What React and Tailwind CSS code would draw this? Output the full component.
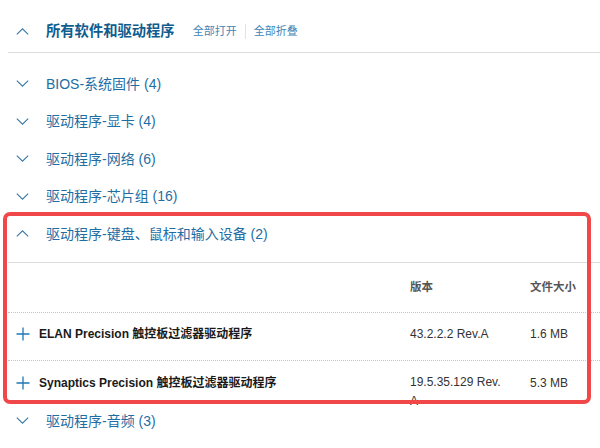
import React from "react";

const ChevronUp = () => (
  <svg width="13" height="7" viewBox="0 0 13 7" fill="none">
    <path d="M0.8 6.3 L6.5 0.9 L12.2 6.3" stroke="#3a7aa8" strokeWidth="1.15" />
  </svg>
);
const ChevronDown = () => (
  <svg width="13" height="7" viewBox="0 0 13 7" fill="none">
    <path d="M0.8 0.7 L6.5 6.1 L12.2 0.7" stroke="#3a7aa8" strokeWidth="1.15" />
  </svg>
);
const Plus = () => (
  <svg width="14" height="14" viewBox="0 0 14 14" fill="none">
    <path d="M7 0.5 V13.5 M0.5 7 H13.5" stroke="#1f78b4" strokeWidth="1.3" />
  </svg>
);

const Row = ({ label, open }) => (
  <div className="flex items-center h-[37.5px]">
    <div className="w-[38px] pl-2 flex items-center">{open ? <ChevronUp /> : <ChevronDown />}</div>
    <span className="text-[14px] text-[#1f6ea3] leading-none">{label}</span>
  </div>
);

export default function App() {
  return (
    <div className="relative w-[600px] h-[448px] overflow-hidden bg-white font-['Liberation_Sans','Noto_Sans_CJK_SC',sans-serif]">
      <div className="pl-2">
        <div className="flex items-center h-[53px] pt-[10px] border-b border-[#dcdcdc]">
          <div className="w-[38px] pl-2 flex items-center"><ChevronUp /></div>
          <span className="text-[14.3px] font-bold text-[#0f5c8e] leading-none">所有软件和驱动程序</span>
          <span className="ml-[18px] text-[11px] text-[#3f86b8] leading-none">全部打开</span>
          <span className="mx-[8px] w-px h-[15px] bg-[#e2e2e2]" />
          <span className="text-[11px] text-[#3f86b8] leading-none">全部折叠</span>
        </div>
        <div className="pt-[12px]">
          <Row label="BIOS-系统固件 (4)" />
          <Row label="驱动程序-显卡 (4)" />
          <Row label="驱动程序-网络 (6)" />
          <Row label="驱动程序-芯片组 (16)" />
          <Row label="驱动程序-键盘、鼠标和输入设备 (2)" open />
          <div className="mt-[9.5px] border-t border-[#dcdcdc]">
            <div className="flex items-center h-[50px] border-b border-dotted border-[#c4c4c4]">
              <div className="flex-1" />
              <div className="w-[120px] text-[11.5px] font-bold text-[#555]">版本</div>
              <div className="w-[70px] text-[11.5px] font-bold text-[#555]">文件大小</div>
            </div>
            <div className="flex items-start h-[48px] pt-[11px] border-b border-dotted border-[#c4c4c4]">
              <div className="flex-1 flex items-center pl-2 gap-[9px] h-[20px]">
                <Plus />
                <span className="text-[12px] font-bold text-[#1a1a1a]">ELAN Precision 触控板过滤器驱动程序</span>
              </div>
              <div className="w-[120px] pr-[24px] text-[12px] leading-[20px] text-[#333]">43.2.2.2 Rev.A</div>
              <div className="w-[70px] text-[12px] leading-[20px] text-[#333]">1.6 MB</div>
            </div>
            <div className="flex items-start h-[41px] pt-[12px]">
              <div className="flex-1 flex items-center pl-2 gap-[9px] h-[20px]">
                <Plus />
                <span className="text-[12px] font-bold text-[#1a1a1a]">Synaptics Precision 触控板过滤器驱动程序</span>
              </div>
              <div className="w-[120px] pr-[24px] text-[12px] leading-[19px] text-[#333]">19.5.35.129 Rev. A</div>
              <div className="w-[70px] text-[12px] leading-[20px] text-[#333]">5.3 MB</div>
            </div>
          </div>
          <Row label="驱动程序-音频 (3)" />
        </div>
      </div>
      <div className="absolute left-[3px] top-[212px] w-[588px] h-[192px] border-4 border-[#f04848] rounded-[7px] pointer-events-none" />
    </div>
  );
}
